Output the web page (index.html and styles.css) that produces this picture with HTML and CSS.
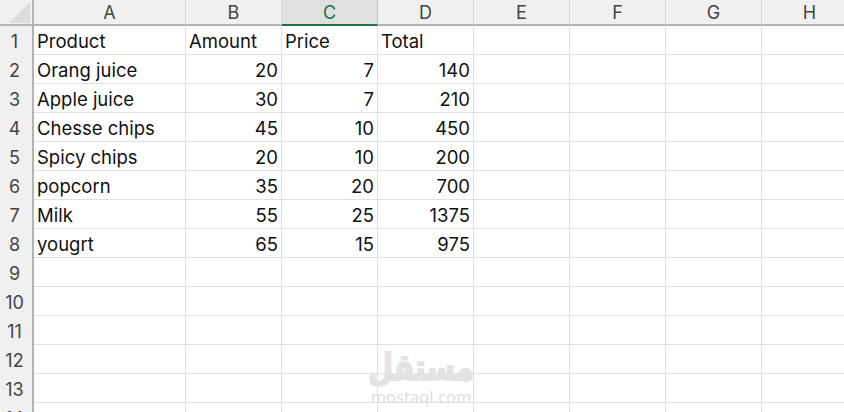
FILE: index.html
```html
<!DOCTYPE html>
<html lang="en">
<head>
<meta charset="utf-8">
<title>Sheet</title>
<link rel="stylesheet" href="styles.css">
</head>
<body>
<div class="clip">
<div class="sheet">
  <div class="row head">
    <div class="rh corner"><svg class="tri" width="22" height="21" viewBox="0 0 22 21"><path d="M21 0V21H0Z" fill="#dcdcdc"/></svg></div>
    <div class="ch">A</div><div class="ch">B</div><div class="ch sel">C</div><div class="ch">D</div><div class="ch">E</div><div class="ch">F</div><div class="ch">G</div><div class="ch">H</div>
  </div>
  <div class="row"><div class="rh">1</div><div class="c">Product</div><div class="c">Amount</div><div class="c">Price</div><div class="c">Total</div><div class="c"></div><div class="c"></div><div class="c"></div><div class="c"></div></div>
  <div class="row"><div class="rh">2</div><div class="c">Orang juice</div><div class="c n">20</div><div class="c n">7</div><div class="c n">140</div><div class="c"></div><div class="c"></div><div class="c"></div><div class="c"></div></div>
  <div class="row"><div class="rh">3</div><div class="c">Apple juice</div><div class="c n">30</div><div class="c n">7</div><div class="c n">210</div><div class="c"></div><div class="c"></div><div class="c"></div><div class="c"></div></div>
  <div class="row"><div class="rh">4</div><div class="c">Chesse chips</div><div class="c n">45</div><div class="c n">10</div><div class="c n">450</div><div class="c"></div><div class="c"></div><div class="c"></div><div class="c"></div></div>
  <div class="row"><div class="rh">5</div><div class="c">Spicy chips</div><div class="c n">20</div><div class="c n">10</div><div class="c n">200</div><div class="c"></div><div class="c"></div><div class="c"></div><div class="c"></div></div>
  <div class="row"><div class="rh">6</div><div class="c">popcorn</div><div class="c n">35</div><div class="c n">20</div><div class="c n">700</div><div class="c"></div><div class="c"></div><div class="c"></div><div class="c"></div></div>
  <div class="row"><div class="rh">7</div><div class="c">Milk</div><div class="c n">55</div><div class="c n">25</div><div class="c n">1375</div><div class="c"></div><div class="c"></div><div class="c"></div><div class="c"></div></div>
  <div class="row"><div class="rh">8</div><div class="c">yougrt</div><div class="c n">65</div><div class="c n">15</div><div class="c n">975</div><div class="c"></div><div class="c"></div><div class="c"></div><div class="c"></div></div>
  <div class="row"><div class="rh">9</div><div class="c"></div><div class="c"></div><div class="c"></div><div class="c"></div><div class="c"></div><div class="c"></div><div class="c"></div><div class="c"></div></div>
  <div class="row"><div class="rh">10</div><div class="c"></div><div class="c"></div><div class="c"></div><div class="c"></div><div class="c"></div><div class="c"></div><div class="c"></div><div class="c"></div></div>
  <div class="row"><div class="rh">11</div><div class="c"></div><div class="c"></div><div class="c"></div><div class="c"></div><div class="c"></div><div class="c"></div><div class="c"></div><div class="c"></div></div>
  <div class="row"><div class="rh">12</div><div class="c"></div><div class="c"></div><div class="c"></div><div class="c"></div><div class="c"></div><div class="c"></div><div class="c"></div><div class="c"></div></div>
  <div class="row"><div class="rh">13</div><div class="c"></div><div class="c"></div><div class="c"></div><div class="c"></div><div class="c"></div><div class="c"></div><div class="c"></div><div class="c"></div></div>
  <div class="row"><div class="rh">14</div><div class="c"></div><div class="c"></div><div class="c"></div><div class="c"></div><div class="c"></div><div class="c"></div><div class="c"></div><div class="c"></div></div>
</div>
</div>
<div class="mark"><div class="mark-ar">مستقل</div><div class="mark-en">mostaql.com</div></div>
</body>
</html>
```
FILE: styles.css
```css
html, body { margin: 0; padding: 0; width: 844px; height: 412px; overflow: hidden; background: #fff; }
.clip { width: 844px; height: 412px; overflow: hidden; }
.sheet { width: 858px; font-family: Inter, sans-serif; font-size: 18.5px; color: #111; }
.row { display: grid; grid-template-columns: 34px 152px repeat(7, 96px); height: 29px; }
.head { height: 26px; }
.rh { background: #f0f0f0; border-right: 2px solid #b4b4b4; box-sizing: border-box; display: flex; align-items: center; justify-content: center; color: #444; font-size: 18px; padding-right: 3px; padding-top: 1px; }
.corner { border-bottom: 2px solid #b4b4b4; justify-content: flex-end; align-items: flex-end; padding: 0 1px 1px 0; }
.tri { display: block; }
.ch { background: #f0f0f0; border-right: 1px solid #d6d6d6; border-bottom: 2px solid #b4b4b4; box-sizing: border-box; display: flex; align-items: center; justify-content: center; color: #444; font-size: 18px; }
.ch.sel { background: #e0e0e0; border-bottom-color: #1f7246; color: #1f7246; border-right-color: #c8c8c8; }
.c { border-right: 1px solid #e0e0e0; border-bottom: 1px solid #e0e0e0; box-sizing: border-box; padding: 1px 3px 0; display: flex; align-items: center; white-space: nowrap; }
.n { justify-content: flex-end; }
.mark { position: absolute; left: 368px; top: 350px; width: 106px; color: #e3e3e3; text-align: center; line-height: 1; }
.mark-ar { font-family: "DejaVu Sans", sans-serif; font-weight: 700; font-size: 29px; height: 38px; line-height: 36px; -webkit-text-stroke: 1.5px #e3e3e3; transform: scaleY(1.25); margin-bottom: 1px; }
.mark-en { font-family: "Noto Sans", sans-serif; font-size: 16.5px; color: #dedede; }
```
